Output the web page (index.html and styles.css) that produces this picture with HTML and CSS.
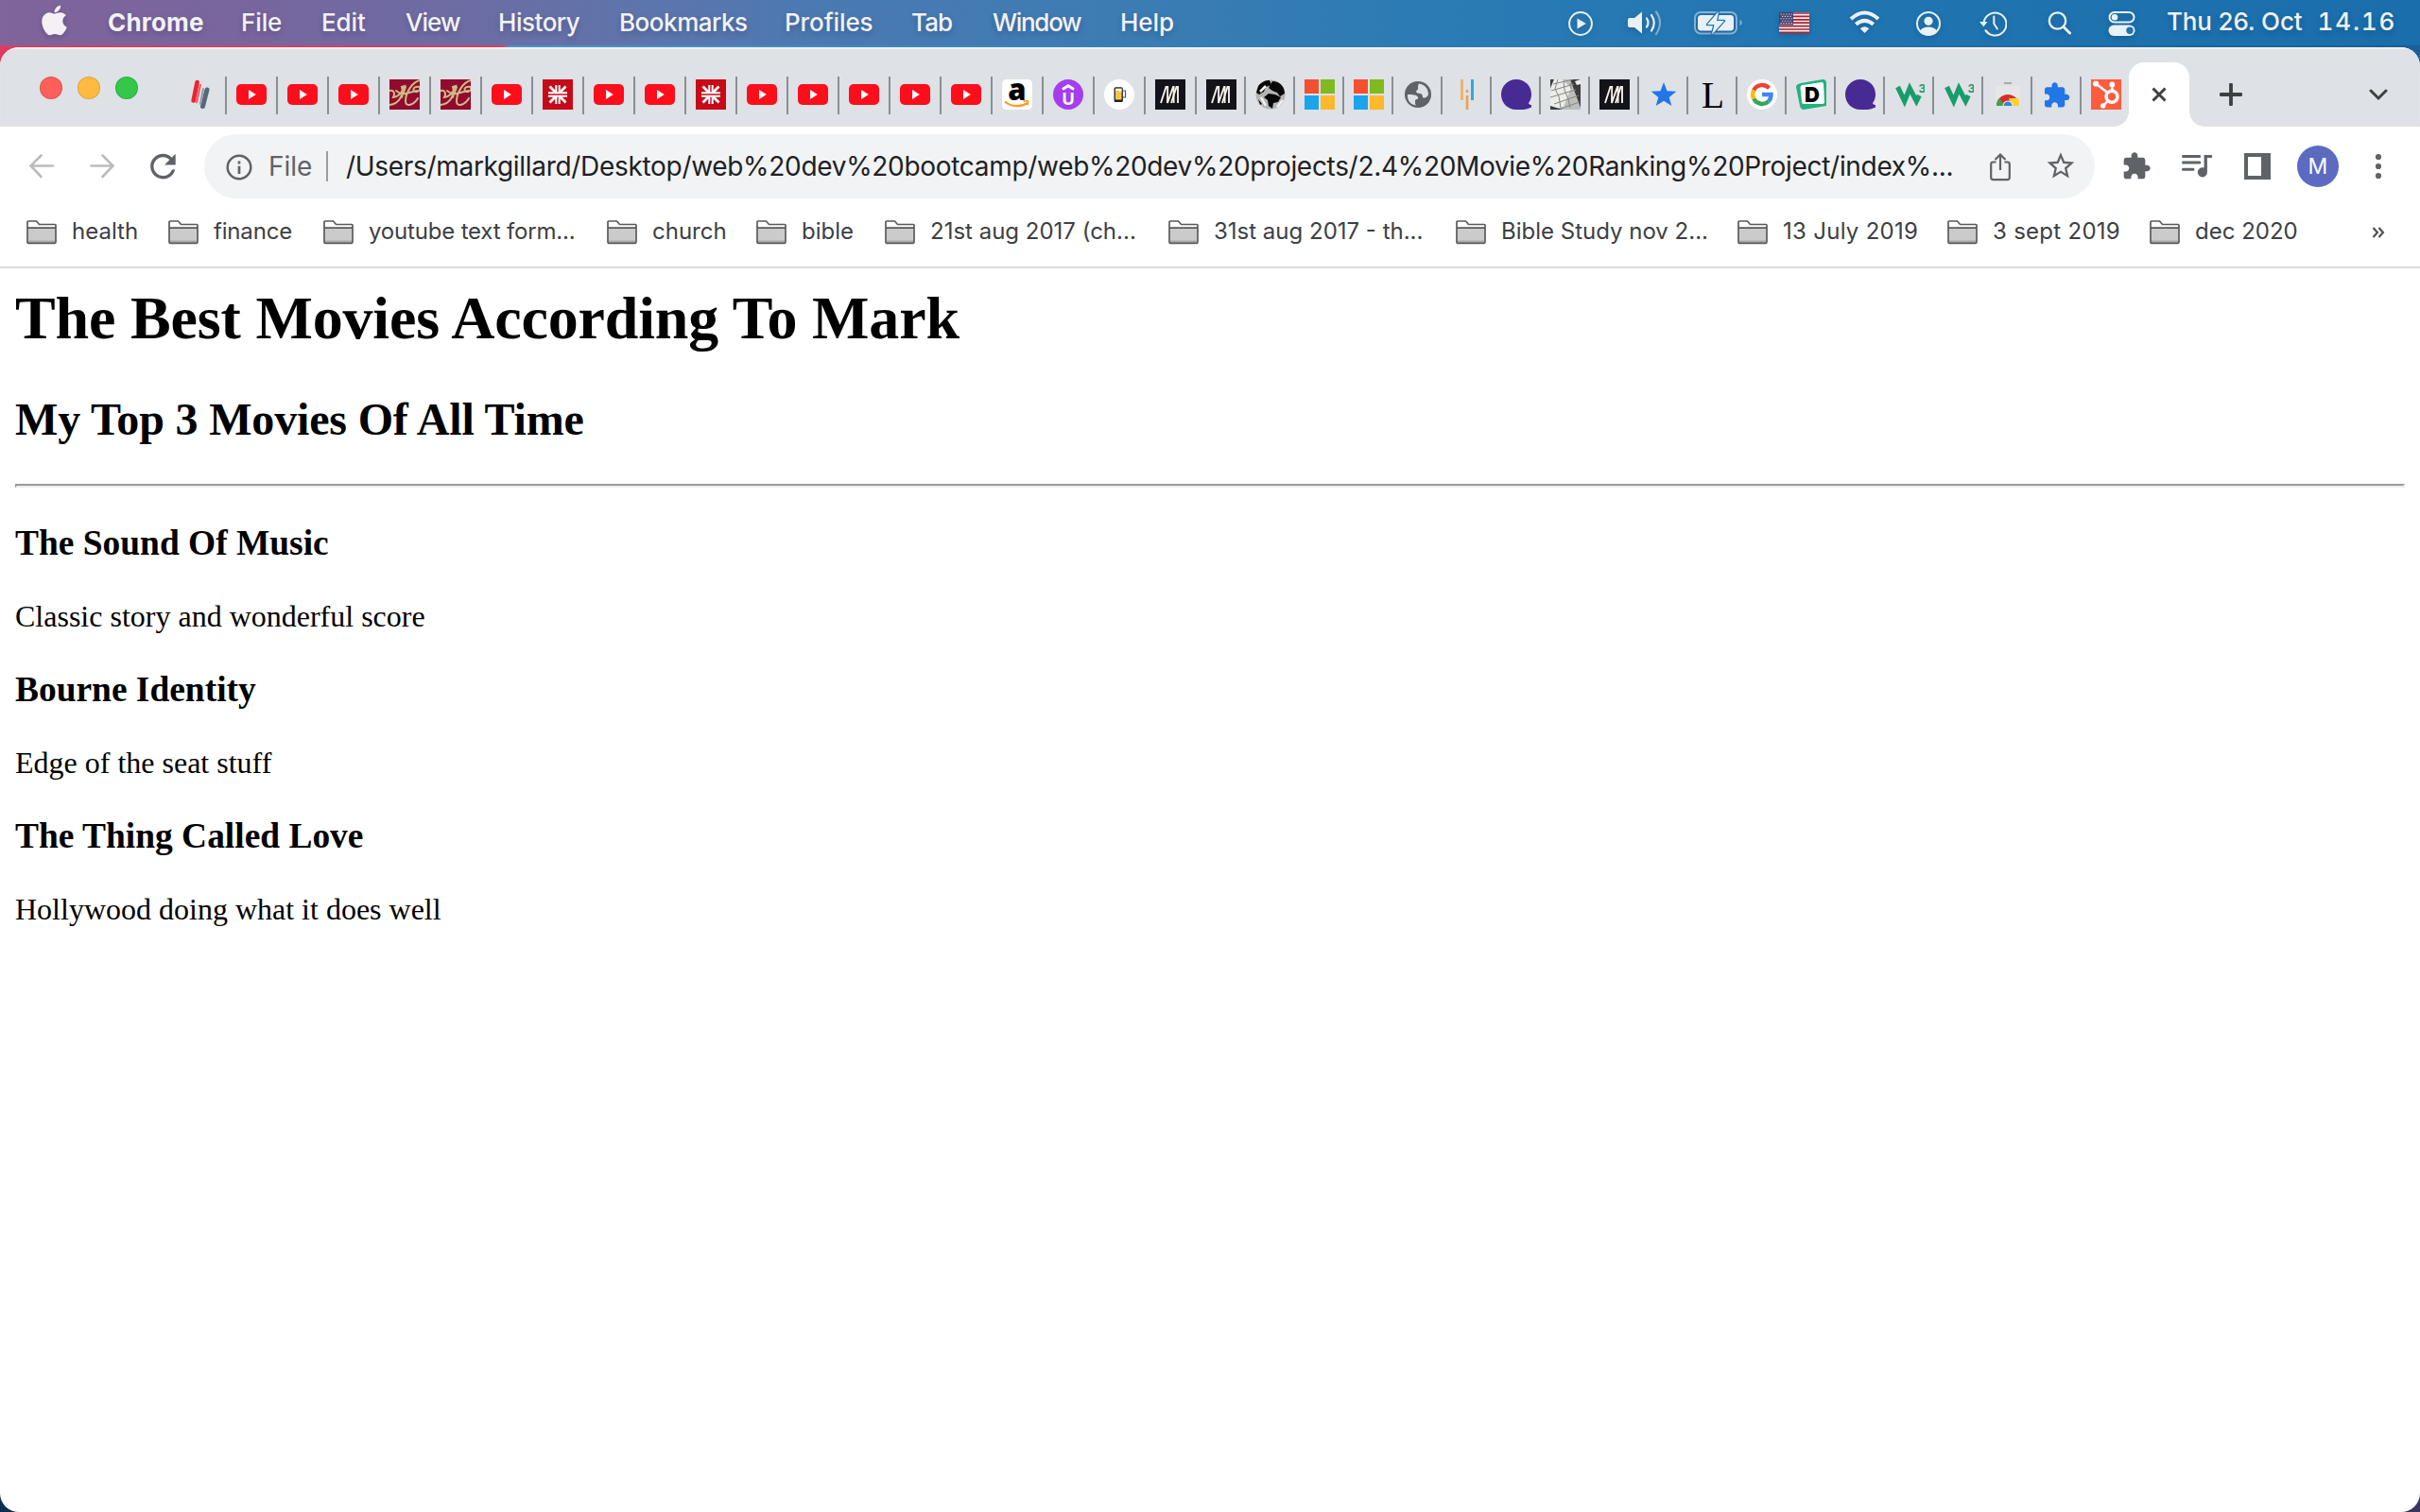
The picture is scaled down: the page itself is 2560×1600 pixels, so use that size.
FILE: index.html
```
<!DOCTYPE html>
<html lang="en">
<head>
<meta charset="utf-8">
<title>The Best Movies According To Mark</title>
<link rel="stylesheet" href="styles.css">
</head>
<body>
<svg class="defs" aria-hidden="true">
  <symbol id="hh" viewBox="0 0 32 32"><g stroke-linecap="round" stroke-width="4.6"><path d="M12.6 3 8.6 22.500" stroke="#ea2430"/><path d="M15.800 6 12 24" stroke="#f0656b" stroke-width="2.500"/><path d="M23 11 18.500 28.500" stroke="#56697b" stroke-width="5"/><path d="M19 10 16 26" stroke="#93a0ac" stroke-width="2.200"/></g></symbol>
  <symbol id="yt" viewBox="0 0 32 32"><rect y="5" width="32" height="22" rx="5" fill="#ff0d1b"/><path d="M13 11v10l7.800-5z" fill="#fff"/></symbol>
  <symbol id="hc" viewBox="0 0 32 32"><path fill="#920a2f" d="M0 0h32v32H0z"/><g fill="none" stroke="#cdbb84" stroke-width="2" stroke-linecap="round"><path d="M0 12c5-1 6 3 4 7 4 0 9-4 12-12l-3 1c2 6-1 19-15 19"/><path d="M17 8c-1 4-3 7-4 11M7 12l6 4 16-4M32 1C24 3 17 14 17 23c0 7 9 4 13-3M32 8c-4-1-8 1-6 4s8-1 6-3"/></g></symbol>
  <symbol id="jack" viewBox="0 0 32 32"><path fill="#c60a18" d="M0 0h32v32H0z"/><g stroke="#fff" stroke-width="2"><path d="M6 14.300h20M6 17.700h20M14.300 6v7.500M17.700 6v7.500M14.300 18.500V26M17.700 18.500V26"/><path stroke-width="2.800" d="m7.500 7.500 6 6M24.500 7.500l-6 6M7.500 24.500l6-6M24.500 24.500l-6-6"/></g></symbol>
  <symbol id="amazon" viewBox="0 0 32 32"><rect width="32" height="32" rx="5" fill="#fff"/><text x="16" y="21.500" text-anchor="middle" font-family="Open Sans" font-weight="800" font-size="31">a</text><path d="M3 23.500c7 6 17 6 24 1.500" fill="none" stroke="#f79d24" stroke-width="2.200"/><path d="M22.500 23.200c5-1.500 6-.5 4.500 4" fill="none" stroke="#f79d24" stroke-width="1.700"/></symbol>
  <symbol id="udemy" viewBox="0 0 32 32"><circle cx="16" cy="16" r="16" fill="#a63ded"/><path d="m10 10.500 6-3.700 6 3.700" fill="none" stroke="#fff" stroke-width="3"/><text x="16" y="27" text-anchor="middle" font-family="Inter" font-weight="700" font-size="18" fill="#fff">U</text></symbol>
  <symbol id="beer" viewBox="0 0 32 32"><circle cx="16" cy="16" r="16" fill="#fff"/><path d="M19.500 12h3v7h-3" fill="none" stroke="#555" stroke-width="1.200"/><rect x="11.200" y="9" width="8" height="14" rx="1" fill="#f5c64b" stroke="#222" stroke-width="1.300"/><path d="M12 9.700h6.500v3H16v-1h-4z" fill="#fff"/><path d="M11 21.500h8.500V24H11z" fill="#222"/></symbol>
  <symbol id="mm" viewBox="0 0 32 32"><path fill="#14131a" d="M0 0h32v32H0z"/><g fill="none" stroke="#f4efe8" stroke-width="1.900"><path d="m6 25 5.500-17h1.700L13 25l6-17h.600v17"/><path d="m17 25 5.500-17H24v17"/></g></symbol>
  <symbol id="earth" viewBox="0 0 32 32"><circle cx="16" cy="16" r="15.500" fill="#b5b5b5"/><path d="M3 7c4-5 8-6 12-6l2 5-6 2-2 5-5 3-3-2zM18 2c8 0 13 6 13 13l-5 3-3-4-5-2-4-3zM14 15l7 1 6 3-3 5-5 1-1 6-4-3-1-6-4-3zM3 21l4 5-2 1z" fill="#080808"/><path d="m5 13 6-6M6 19l5 9M23 29l6-7" stroke="#f2f2f2" stroke-width="2.500"/></symbol>
  <symbol id="ms" viewBox="0 0 32 32"><path fill="#f25130" d="M0 0h15v15H0z"/><path fill="#80b921" d="M17 0h15v15H17z"/><path fill="#1ba4ec" d="M0 17h15v15H0z"/><path fill="#fdb82c" d="M17 17h15v15H17z"/></symbol>
  <symbol id="globe" viewBox="0 0 32 32"><circle cx="16" cy="16" r="14" fill="#5f6368"/><path d="M5 16c5 0 10 0 11 3s-3 1-3 4 0 3 1 4.500C8 27 4.500 22 5 16zM17 4.500c-2 3 0 6-2 7s-1 3 3 3.500 2 4 4 4.500 4-1 5-3.500C27 10 23 5 17 4.500z" fill="#dee1e6"/></symbol>
  <symbol id="bars" viewBox="0 0 32 32"><path d="M10.500 0v22" stroke="#f0b26a" stroke-width="3"/><path d="M21.500 0v22" stroke="#33a9da" stroke-width="3"/><path d="M16 17v15M16 11v3" stroke="#f0a14a" stroke-width="2.600"/></symbol>
  <symbol id="bubble" viewBox="0 0 32 32"><path d="M16 0c9 0 16 7 16 15.500 0 4-1 7-3 9.500.5 1.500 1.500 2 3 2v2.500C25 33 19 32 16 32 7 32 0 25 0 16S7 0 16 0z" fill="#482a94"/></symbol>
  <symbol id="keys" viewBox="0 0 32 32"><path fill="#bdbdbb" d="M0 0h32v32H0z"/><path fill="#ecece9" d="M3 0h9l10 9-8 20-14 3V12z"/><path fill="#3d3d3d" d="m21 0 11 30V0zM0 0h4L0 9zM0 28l13 4H0z"/><path fill="#eee" d="m26 2 6-2v5l-4 1z"/><path d="M3 5 24 0M1 12l24-7M0 19l27-8M4 26l26-9M11 31l20-7M8 0l-3 10 4 8 2 12M14 2l1 9 4 10 2 9M21 4l1 6" fill="none" stroke="#858583" stroke-width="1"/></symbol>
  <symbol id="star" viewBox="0 0 32 32"><path d="m16 3 3.500 9.200 9.800.5-7.600 6.200L24.300 28 16 22.800 7.700 28l2.600-9.100-7.600-6.200 9.800-.5z" fill="#2176e8"/></symbol>
  <symbol id="ell" viewBox="0 0 32 32"><text x="4" y="29.800" font-family="Liberation Serif" font-size="41" textLength="24" lengthAdjust="spacingAndGlyphs">L</text></symbol>
  <symbol id="google" viewBox="0 0 32 32"><circle cx="16" cy="16" r="16" fill="#fff"/><g fill="none" stroke-width="4.400"><path d="M23.500 9.200A10 10 0 0 0 7.200 11.500" stroke="#ea4335"/><path d="M7.200 11.500a10 10 0 0 0 0 9" stroke="#fbbc05"/><path d="M7.200 20.500A10 10 0 0 0 22.800 23.300" stroke="#34a853"/><path d="M22.800 23.300A10 10 0 0 0 25.500 16H16" stroke="#4285f4"/></g></symbol>
  <symbol id="dd" viewBox="0 0 32 32"><path d="M5 4 28 0q4 0 4 4v24L8 32q-3 0-4-4L0 8q0-3 5-4z" fill="#1fb37d"/><path d="m7 6 20-3q2 0 2 2l1 19q0 2-2 2H8q-2 0-2-2L4.500 9Q4.500 6 7 6z" fill="#fff"/><text x="17" y="23.500" text-anchor="middle" font-family="Inter" font-weight="900" font-size="22">D</text></symbol>
  <symbol id="w3" viewBox="0 0 32 32"><path d="m3.500 8 7.200 15 5.500-13.500L23.300 23l3-6" fill="none" stroke="#199c6b" stroke-width="5.200"/><text x="25.500" y="14" font-family="Inter" font-weight="700" font-size="12" fill="#199c6b">3</text></symbol>
  <symbol id="store" viewBox="0 0 32 32"><path fill="#e6e6e7" d="M3 7h26v21H3z"/><path stroke="#a9abae" stroke-width="2" d="M12 4h8"/><path d="M4 28a12 12 0 0 1 24 0z" fill="#da2b2c"/><path d="M4 28c0-4 1-6 3-8l6 8z" fill="#43a047"/><path d="M17 20h10c1 3 1 5 1 8h-9z" fill="#fdcf2f"/><path d="M10.500 28a5.500 5.500 0 0 1 11 0z" fill="#f4f7fa"/><path d="M11.500 28a4.500 4.500 0 0 1 9 0z" fill="#3186d6"/></symbol>
  <symbol id="puzzle" viewBox="0 0 24 24"><path d="M20.500 11H19V7c0-1.100-.9-2-2-2h-4V3.500C13 2.120 11.880 1 10.500 1S8 2.120 8 3.500V5H4c-1.100 0-1.990.9-1.990 2v3.800H3.500c1.490 0 2.700 1.210 2.700 2.700s-1.210 2.700-2.700 2.700H2V20c0 1.100.9 2 2 2h3.800v-1.500c0-1.490 1.210-2.700 2.700-2.700 1.490 0 2.700 1.210 2.700 2.700V22H17c1.100 0 2-.9 2-2v-4h1.500c1.380 0 2.500-1.120 2.500-2.500S21.880 11 20.500 11z"/></symbol>
  <symbol id="hub" viewBox="0 0 32 32"><path fill="#ff5c3e" d="M0 0h32v32H0z"/><g stroke="#fff" fill="none"><circle cx="22" cy="18.300" r="6" stroke-width="3.500"/><path stroke-width="2.600" d="M5 4.500 17.500 14M22.300 6v7M17.500 23 13 28"/></g><g fill="#fff"><circle cx="5" cy="4.500" r="3.100"/><circle cx="22.300" cy="5.500" r="2.900"/><circle cx="12.700" cy="28" r="2.700"/></g></symbol>
  <symbol id="folder" viewBox="0 0 32 26"><path d="M1 24.500V1.800Q1 1 1.800 1h8.500l4 4H30q1 0 1 1v18.500z" fill="#fff"/><path d="M1.500 8.500h29V24h-29z" fill="#cbcbcb"/><path d="M2 21.500h28V24H2z" fill="#aaa"/><path d="M1 24V2q0-1 1-1h8.500l3 3.500H30q1 0 1 1V23q0 1.300-1 1.300H2Q1 24.300 1 23M1 8.200h30" fill="none" stroke="#58595b" stroke-width="1.700"/></symbol>
</svg>

<div class="desktop">
  <header class="menubar">
    <svg class="apple" viewBox="0 0 170 170"><path fill="#f4f0f6" d="M150.400 130.300c-2.500 5.700-5.400 10.900-8.700 15.700-4.600 6.500-8.300 11-11.200 13.500-4.500 4.100-9.300 6.200-14.400 6.300-3.700 0-8.100-1-13.300-3.200-5.200-2.100-10-3.200-14.400-3.200-4.600 0-9.500 1-14.700 3.200-5.300 2.100-9.500 3.200-12.800 3.300-4.900.2-9.800-1.900-14.700-6.400-3.100-2.700-7-7.400-11.700-14-5-7.100-9.200-15.300-12.400-24.700C18.700 110.700 17 100.900 17 91.400c0-10.900 2.400-20.300 7.100-28.100 3.700-6.300 8.600-11.300 14.700-15s12.800-5.500 19.900-5.600c3.900 0 9.100 1.200 15.400 3.600 6.400 2.400 10.400 3.600 12.200 3.600 1.400 0 5.900-1.400 13.500-4.200 7.200-2.600 13.300-3.700 18.300-3.200 13.500 1.100 23.700 6.400 30.500 16-12.100 7.300-18.100 17.600-18 30.800.1 10.300 3.800 18.800 11.200 25.600 3.300 3.100 7 5.600 11.100 7.300-.9 2.600-1.800 5.100-2.800 7.500zM119.100 7.200c0 8-2.900 15.500-8.800 22.500-7.100 8.300-15.600 13-24.800 12.300-.1-1-.2-2-.2-3 0-7.700 3.400-16 9.300-22.700 3-3.400 6.800-6.300 11.400-8.600 4.600-2.200 8.900-3.500 13-3.700.1 1.100.1 2.200.1 3.200z"/></svg>
    <nav class="menus"><b>Chrome</b><span>File</span><span>Edit</span><span>View</span><span>History</span><span>Bookmarks</span><span>Profiles</span><span>Tab</span><span>Window</span><span>Help</span></nav>
    <div class="status">
      <svg width="26" viewBox="1659 0 26 48"><circle cx="1672" cy="25" r="11.900" fill="none" stroke="#e9f1f7" stroke-width="2"/><path d="M1668.500 19.500v11l9.300-5.500z" fill="#e9f1f7"/></svg>
      <svg width="37" viewBox="1721 0 37 48"><path d="M1724 19h5l8-6.500v23l-8-6.500h-5q-2 0-2-2v-6q0-2 2-2z" fill="#e9f1f7"/><g fill="none" stroke="#e9f1f7" stroke-width="2.200" stroke-linecap="round"><path d="M1742 19.500q3 4.500 0 9M1747 16q5.500 8 0 16.500"/><path opacity=".45" d="M1752 12.500q8 11.500 0 23.500"/></g></svg>
      <svg width="53" viewBox="1791 0 53 48"><rect x="1793" y="13" width="44" height="22.500" rx="6" fill="none" stroke="#e9f1f7" stroke-opacity=".5" stroke-width="2"/><rect x="1796" y="16" width="38" height="16.500" rx="3.500" fill="#e9f1f7"/><path d="M1840.500 20.500q4.500 3.500 0 7z" fill="#e9f1f7" opacity=".5"/><path d="m1818 12-12 14h7.500l-2.500 10.500 13-14.500h-8z" fill="#e9f1f7" stroke="#2477b2" stroke-width="2.600" stroke-linejoin="round" paint-order="stroke"/></svg>
      <svg width="32" viewBox="1882 0 32 48"><path fill="#f4eff0" d="M1882 13h32v22h-32z"/><path stroke="#a8232d" stroke-width="1.700" d="M1882 14h32m-32 3.400h32m-32 3.400h32m-32 3.400h32m-32 3.400h32m-32 3.400h32m-32 3.300h32"/><path fill="#46406f" d="M1882 13h15v13.500h-15z"/><path stroke="#dcd9e6" stroke-dasharray="1.300 1.500" stroke-width="1.100" d="M1883.500 15h12.500m-11 2.400h11m-12.500 2.400h12.500m-11 2.400h11m-12.500 2.400h12.500"/></svg>
      <svg width="33" viewBox="1955.500 0 33 48"><g fill="none" stroke="#e9f1f7" stroke-width="4"><path d="M1957.500 20q14.500-13 29 0"/><path d="M1962.800 25.800q9.200-8 18.400 0"/></g><path d="m1972 35-4.700-4.800q4.700-3.700 9.400 0z" fill="#e9f1f7"/></svg>
      <svg width="26" viewBox="2027 0 26 48"><circle cx="2040" cy="25" r="12" fill="none" stroke="#e9f1f7" stroke-width="2"/><circle cx="2040" cy="22.300" r="4.600" fill="#e9f1f7"/><path d="M2031 33q2-4.500 9-4.500t9 4.500q-4 4-9 4t-9-4z" fill="#e9f1f7"/></svg>
      <svg width="29" viewBox="2094 0 29 48"><path d="M2098.500 24a12 12 0 1 1 1.500 7.500" fill="none" stroke="#e9f1f7" stroke-width="2"/><path d="M2101 32.500a12 12 0 0 0 3 3" stroke="#e9f1f7" stroke-width="2"/><path d="M2094 23h8.500l-4.200 5.200z" fill="#e9f1f7"/><path d="M2109.300 17.500V25l3.500 5.500" fill="none" stroke="#e9f1f7" stroke-width="2" stroke-linecap="round"/></svg>
      <svg width="26" viewBox="2166 0 26 48"><circle cx="2176.500" cy="22" r="8.700" fill="none" stroke="#e9f1f7" stroke-width="2.300"/><path d="m2183 28.500 6.500 6.500" stroke="#e9f1f7" stroke-width="3" stroke-linecap="round"/></svg>
      <svg width="29" viewBox="2229.500 0 29 48"><rect x="2231" y="13" width="26" height="10.500" rx="5.250" fill="none" stroke="#e9f1f7" stroke-width="2"/><circle cx="2236.500" cy="18.300" r="3.300" fill="#e9f1f7"/><rect x="2230" y="26.500" width="28" height="11.500" rx="5.700" fill="#e9f1f7"/><circle cx="2252.500" cy="32.200" r="3.700" fill="#1f73af"/></svg>
    </div>
    <div class="clock"><span>Thu 26. Oct</span><span class="time">14.16</span></div>
  </header>

  <section class="window">
    <div class="strip">
      <div class="lights"><i class="close"></i><i class="min"></i><i class="max"></i></div>
      <div class="tabs wide">
        <svg><use href="#hh"/></svg><svg><use href="#yt"/></svg><svg><use href="#yt"/></svg><svg><use href="#yt"/></svg><svg><use href="#hc"/></svg><svg><use href="#hc"/></svg><svg><use href="#yt"/></svg><svg><use href="#jack"/></svg><svg><use href="#yt"/></svg><svg><use href="#yt"/></svg><svg><use href="#jack"/></svg><svg><use href="#yt"/></svg><svg><use href="#yt"/></svg><svg><use href="#yt"/></svg><svg><use href="#yt"/></svg><svg><use href="#yt"/></svg><svg><use href="#amazon"/></svg><svg><use href="#udemy"/></svg><svg><use href="#beer"/></svg><svg><use href="#mm"/></svg>
      </div>
      <div class="tabs">
        <svg><use href="#mm"/></svg><svg><use href="#earth"/></svg><svg><use href="#ms"/></svg><svg><use href="#ms"/></svg><svg><use href="#globe"/></svg><svg><use href="#bars"/></svg><svg><use href="#bubble"/></svg><svg><use href="#keys"/></svg><svg><use href="#mm"/></svg><svg><use href="#star"/></svg><svg><use href="#ell"/></svg><svg><use href="#google"/></svg><svg><use href="#dd"/></svg><svg><use href="#bubble"/></svg><svg><use href="#w3"/></svg><svg><use href="#w3"/></svg><svg><use href="#store"/></svg><svg class="blue"><use href="#puzzle" x="0.500" y="2" width="30" height="30"/></svg><svg class="last"><use href="#hub"/></svg>
      </div>
      <div class="active-tab"><svg width="16" height="16" viewBox="0 0 16 16"><path d="m1.500 1.500 13 13m0-13-13 13" stroke="#3c4043" stroke-width="3"/></svg></div>
      <svg class="plus" width="24" height="24" viewBox="0 0 24 24"><path d="M12 1.500v21M1.500 12h21" stroke="#3c4043" stroke-width="3.800" stroke-linecap="round"/></svg>
      <svg class="chevron" width="20" height="14" viewBox="0 0 20 14"><path d="m2 3 8 8 8-8" fill="none" stroke="#3c4043" stroke-width="3" stroke-linecap="round"/></svg>
    </div>

    <div class="toolbar">
      <svg width="190" height="84" viewBox="0 134 190 84"><g fill="none" stroke="#babcbe" stroke-width="2.600" stroke-linecap="round"><path d="M56 175.500H33M43.500 164.500 32.500 175.500l11 11.500"/><path d="M96.500 175.500h23M108.500 164.500l11 11-11 11.500"/></g><path transform="translate(152.500 156.200) scale(1.660)" fill="#5f6368" d="M17.650 6.350C16.200 4.900 14.210 4 12 4c-4.420 0-7.990 3.580-7.990 8s3.570 8 7.990 8c3.730 0 6.840-2.550 7.730-6h-2.080c-.82 2.330-3.040 4-5.650 4-3.310 0-6-2.690-6-6s2.690-6 6-6c1.660 0 3.140.69 4.220 1.780L13 11h7V4l-2.350 2.350z"/></svg>
      <div class="omnibox">
        <svg class="info" width="28" height="28" viewBox="0 0 28 28"><circle cx="14" cy="14" r="12.300" fill="none" stroke="#5f6368" stroke-width="2.500"/><path d="M14 12.800V21M14 7.500v3" stroke="#5f6368" stroke-width="2.700"/></svg>
        <span class="scheme">File</span>
        <span class="url">/Users/markgillard/Desktop/web%20dev%20bootcamp/web%20dev%20projects/2.4%20Movie%20Ranking%20Project/index%...</span>
        <svg width="96" height="68" viewBox="2104 142 96 68"><path d="M2111.500 171.500h-3q-2.300 0-2.300 2.300v14q0 2.300 2.300 2.300h15q2.300 0 2.300-2.300v-14q0-2.300-2.300-2.300h-3M2116 180v-16M2110.500 169l5.500-5.500 5.500 5.500" fill="none" stroke="#5f6368" stroke-width="2.200"/><path transform="translate(2162.800 158.400) scale(1.430)" fill="#5f6368" d="M22 9.240l-7.190-.62L12 2 9.190 8.630 2 9.240l5.460 4.730L5.820 21 12 17.270 18.180 21l-1.630-7.030L22 9.240zM12 15.400l-3.760 2.270 1-4.280-3.320-2.880 4.380-.38L12 6.100l1.710 4.040 4.380.38-3.320 2.880 1 4.280L12 15.400z"/></svg>
      </div>
      <svg class="puzzle" width="32" height="32"><use href="#puzzle"/></svg>
      <svg width="96" height="84" viewBox="2308 134 96 84" fill="#5f6368"><path transform="translate(2303 153.800) scale(1.680)" d="M14.300 6H3.700q-.7 0-.7.900t.7.900h10.600q.7 0 .7-.9t-.7-.9zM14.300 10H3.700q-.7 0-.7.900t.7.900h10.600q.7 0 .7-.9t-.7-.9zM3.700 16h6.600q.7 0 .7-.9t-.7-.9H3.700q-.7 0-.7.900t.7.900zM17 6v8.180c-.31-.11-.65-.18-1-.18-1.660 0-3 1.340-3 3s1.340 3 3 3 3-1.340 3-3V7.800h3V6h-5z"/><path fill-rule="evenodd" d="M2374 162h28v28h-28zm4 4v20h14v-20z"/></svg>
      <span class="avatar">M</span>
      <svg class="dots" width="8" height="28" viewBox="0 0 8 28" fill="#5f6368"><circle cx="4" cy="4" r="3.100"/><circle cx="4" cy="14" r="3.100"/><circle cx="4" cy="24" r="3.100"/></svg>
    </div>

    <nav class="bookmarks">
      <a><svg><use href="#folder"/></svg>health</a><a><svg><use href="#folder"/></svg>finance</a><a><svg><use href="#folder"/></svg>youtube text form...</a><a><svg><use href="#folder"/></svg>church</a><a><svg><use href="#folder"/></svg>bible</a><a><svg><use href="#folder"/></svg>21st aug 2017 (ch...</a><a><svg><use href="#folder"/></svg>31st aug 2017 - th...</a><a><svg><use href="#folder"/></svg>Bible Study nov 2...</a><a><svg><use href="#folder"/></svg>13 July 2019</a><a><svg><use href="#folder"/></svg>3 sept 2019</a><a><svg><use href="#folder"/></svg>dec 2020</a>
      <svg class="more" viewBox="0 0 14 12"><path d="m1.500 1 4.500 5-4.500 5M7.500 1 12 6l-4.500 5" fill="none" stroke="#4a4d51" stroke-width="2.100"/></svg>
    </nav>

    <main class="page">
      <h1>The Best Movies According To Mark</h1>
      <h2>My Top 3 Movies Of All Time</h2>
      <hr>
      <h3>The Sound Of Music</h3>
      <p>Classic story and wonderful score</p>
      <h3>Bourne Identity</h3>
      <p>Edge of the seat stuff</p>
      <h3>The Thing Called Love</h3>
      <p>Hollywood doing what it does well</p>
    </main>
  </section>
</div>
</body>
</html>
```
FILE: styles.css
```
* { box-sizing: border-box; }
body { margin: 0; font-family: Inter, sans-serif; }
svg { display: block; flex: none; }
.defs { display: none; }

.desktop {
  width: 2560px;
  height: 1600px;
  overflow: hidden;
  display: flex;
  flex-direction: column;
  background:
    linear-gradient(to right, #dc3c60 0 530px, #4797c8 540px, #2c80b4 1300px, #1a5f98) 0 0 / 100% 100px no-repeat,
    linear-gradient(to right, #0c2d50, #3a3562);
}

/* System menu bar */
.menubar {
  height: 48px;
  flex: none;
  display: flex;
  margin-bottom: 2px;
  color: #f2f2f7;
  font-size: 26px;
  font-weight: 500;
  line-height: 48px;
  white-space: nowrap;
  text-shadow: 0 3px 6px rgba(0, 0, 40, .22);
  background: linear-gradient(to right, #80649b 0, #77669e 280px, #6a6ea5 530px, #5c75ad 700px, #4b79b2 870px, #3d7cb3 1170px, #2b7bb4 1530px, #2176b2 1920px, #196eab 2560px);
}
.menubar svg { filter: drop-shadow(0 2px 3px rgba(0, 0, 40, .2)); }
.apple { width: 33px; height: 33px; margin: 5px 0 0 41px; }
.menus {
  margin-left: 40px;
  width: 1545px;
  display: grid;
  grid-template-columns: 141px 85px 89px 98px 128px 175px 134px 86px 135px auto;
}
.menus b { letter-spacing: .19px; }
.menus span { letter-spacing: -.1px; }
.menus :nth-child(4), .menus :nth-child(8) { letter-spacing: -.93px; }
.menus :nth-child(5), .menus :nth-child(6) { letter-spacing: -.47px; }
.menus :nth-child(9) { letter-spacing: -1.3px; }
.status { display: flex; }
.status svg { height: 48px; margin-right: 36px; }
.status svg:nth-child(2) { margin-right: 33px; }
.status svg:nth-child(3) { margin-right: 38px; }
.status svg:nth-child(4) { margin-right: 41.500px; }
.status svg:nth-child(5) { margin-right: 38.500px; }
.status svg:nth-child(6) { margin-right: 41px; }
.status svg:nth-child(7) { margin-right: 43px; }
.status svg:nth-child(8) { margin-right: 37.500px; }
.status svg:nth-child(9) { margin-right: 0; }
.clock { display: flex; margin-left: 33.500px; line-height: 46px; letter-spacing: -.15px; }
.time { margin-left: 16px; letter-spacing: 1.900px; font-variant-numeric: tabular-nums; }

/* Browser window */
.window {
  flex: 1;
  display: flex;
  flex-direction: column;
  overflow: hidden;
  border-radius: 20px;
  background: #fff;
}
.strip {
  height: 84px;
  flex: none;
  display: flex;
  background: #dee1e6;
  box-shadow: inset 0 2px 1px #f0f2f4;
}
.lights { width: 186px; display: flex; gap: 16px; padding: 31px 0 0 42px; }
.lights i { width: 24px; height: 24px; border-radius: 50%; border: 1px solid rgba(0, 0, 0, .12); }
.close { background: #fe5f59; }
.min { background: #febb3f; }
.max { background: #34c749; }
.tabs { display: flex; margin-top: 31px; height: 40px; }
.tabs > svg {
  box-sizing: border-box;
  width: 52px;
  height: 40px;
  padding: 3px 8px 5px 10px;
  border-right: 2px solid #8b8e93;
}
.wide > svg { width: 54px; padding-right: 10px; }
.tabs > .last { width: 50px; border-right: 0; }
.blue { fill: #2176e8; }
.active-tab {
  position: relative;
  width: 64px;
  height: 68px;
  margin-top: 16px;
  padding-top: 26px;
  display: flex;
  justify-content: center;
  border-radius: 16px 16px 0 0;
  background: #fff;
}
.active-tab::before, .active-tab::after {
  content: "";
  position: absolute;
  bottom: 0;
  width: 16px;
  height: 16px;
}
.active-tab::before { left: -16px; background: radial-gradient(circle at 0 0, transparent 15.500px, #fff 16px); }
.active-tab::after { right: -16px; background: radial-gradient(circle at 100% 0, transparent 15.500px, #fff 16px); }
.plus { margin: 38px 0 0 32px; }
.chevron { margin: 43px 34px 0 auto; }

.toolbar { height: 76px; flex: none; display: flex; }
.toolbar > svg:first-child { margin-right: 26px; }
.omnibox {
  width: 2000px;
  height: 68px;
  margin-top: 8px;
  display: flex;
  border-radius: 34px;
  background: #f1f3f4;
  font-size: 28px;
  line-height: 68px;
  white-space: nowrap;
}
.info { margin: 20.500px 0 0 22.500px; }
.scheme { width: 63px; margin-left: 17.500px; color: #5f6368; position: relative; }
.scheme::after { content: ""; position: absolute; right: 0; top: 18px; width: 2px; height: 32px; background: #9a9da1; }
.url { width: 1738px; margin-left: 19px; color: #202124; letter-spacing: -.31px; }
.puzzle { margin: 26px 32px 0 28px; fill: #5f6368; }
.avatar {
  width: 44px;
  height: 44px;
  margin: 20px 0 0 26px;
  border-radius: 50%;
  background: #5c6bc0;
  color: #fff;
  font-size: 23px;
  line-height: 44px;
  text-align: center;
}
.dots { margin: 28px 0 0 38px; }

.bookmarks {
  height: 74px;
  flex: none;
  padding-left: 28px;
  display: grid;
  grid-template-columns: 150px 164px 300px 158px 136px 300px 304px 298px 222px 214px 235px 14px;
  border-bottom: 2px solid #dadbdd;
  color: #3c4043;
  font-size: 24px;
  line-height: 70px;
  white-space: nowrap;
}
.bookmarks a { display: flex; gap: 16px; }
.bookmarks a svg { width: 32px; height: 26px; margin-top: 23px; }
.bookmarks a:nth-child(2), .bookmarks a:nth-child(3) { letter-spacing: -.18px; }
.bookmarks a:nth-child(9), .bookmarks a:nth-child(10) { letter-spacing: .28px; }
.bookmarks .more { width: 14px; height: 12px; margin-top: 30px; }

/* Document shown in the window */
.page { padding: 16px; color: #000; font-family: "Liberation Serif", serif; font-size: 32px; line-height: 37px; }
h1, h2, h3, p { margin: 0; }
h1 { font-size: 64px; line-height: 74px; letter-spacing: -.17px; }
h2 { margin-top: 43px; font-size: 48px; line-height: 54px; letter-spacing: -.17px; }
hr { height: 4px; margin: 41px 0 37.400px; border: 2px solid #9a9a9a; border-right-color: #eee; border-bottom-color: #eee; }
h3 { font-size: 37.440px; line-height: 43px; }
p { margin: 37.440px 0; }
```
